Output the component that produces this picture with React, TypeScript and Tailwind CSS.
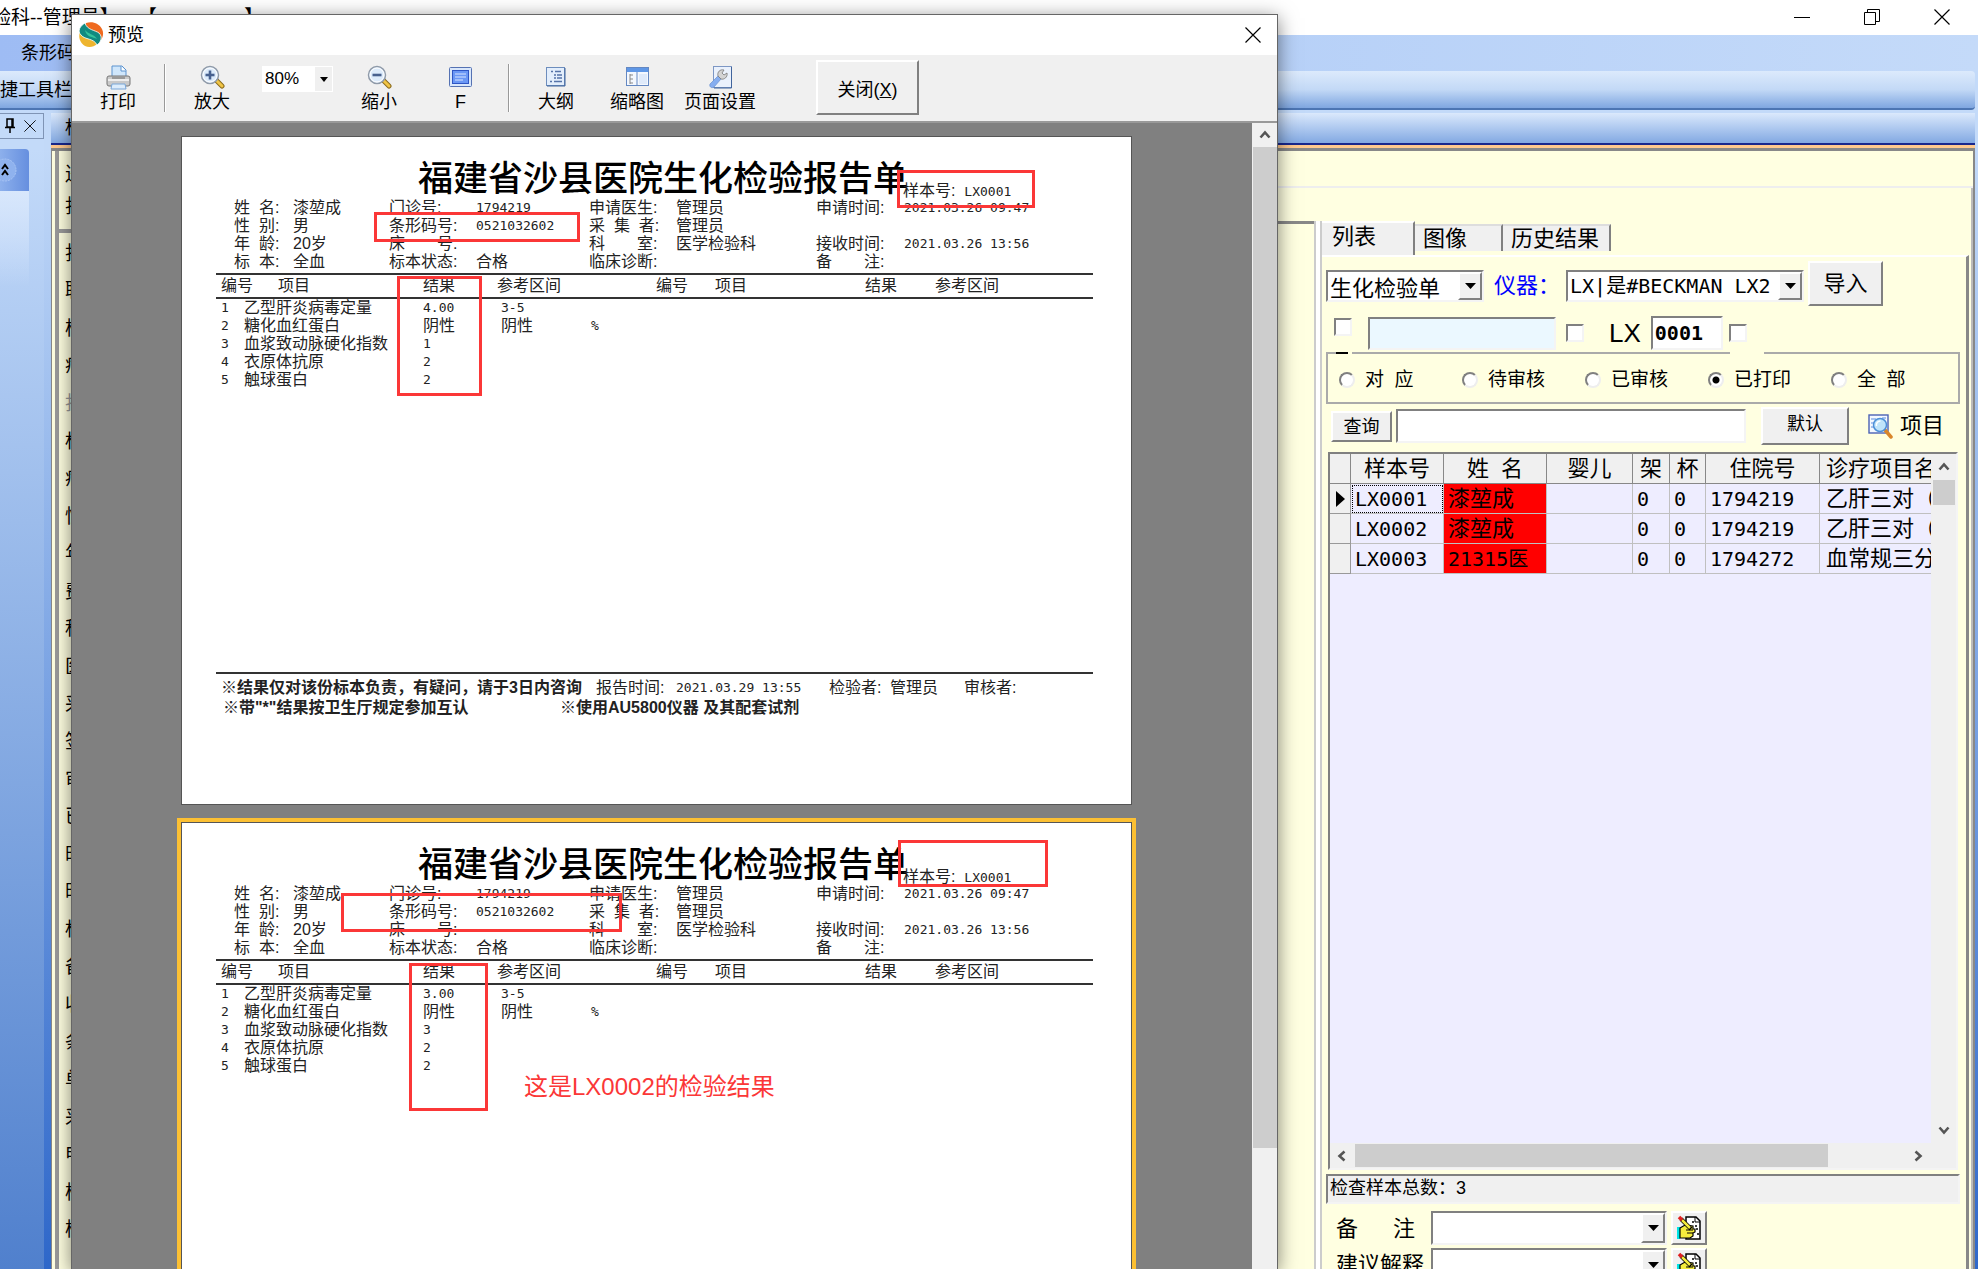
import type { ReactNode } from 'react';
import clsx from 'clsx';

const CJK = "font-['Liberation_Sans','Noto_Sans_CJK_SC',sans-serif]";
const MONO = "font-['DejaVu_Sans_Mono','Noto_Sans_CJK_SC',monospace]";

const SUNKEN = 'border-2 border-t-[#808080] border-l-[#808080] border-b-[#f4f4f4] border-r-[#f4f4f4]';
const RAISED = 'border-2 border-t-white border-l-white border-b-[#808080] border-r-[#808080] bg-[#f0f0f0]';

const samples = [
  { id: 'LX0001', name: '漆堃成', rack: '0', cup: '0', inpatient: '1794219', item: '乙肝三对（' },
  { id: 'LX0002', name: '漆堃成', rack: '0', cup: '0', inpatient: '1794219', item: '乙肝三对（' },
  { id: 'LX0003', name: '21315医', rack: '0', cup: '0', inpatient: '1794272', item: '血常规三分' },
];

const statuses = ['对  应', '待审核', '已审核', '已打印', '全  部'];

const formLabels = [
  '打', '联', '样', '病', '打', '标', '病', '性', '年', '费', '科', '医', '采', '签',
  '审', '已', '时', '时', '标', '备', '收', '条', '单', '采', '申', '样', '样',
];

const patientRows = [
  ['姓  名:', '漆堃成', '门诊号:', '1794219', '申请医生:', '管理员', '申请时间:', '2021.03.26 09:47'],
  ['性  别:', '男', '条形码号:', '0521032602', '采  集  者:', '管理员', '', ''],
  ['年  龄:', '20岁', '床　　号:', '', '科　　室:', '医学检验科', '接收时间:', '2021.03.26 13:56'],
  ['标  本:', '全血', '标本状态:', '合格', '临床诊断:', '', '备　　注:', ''],
];

const reportItems = [
  { name: '乙型肝炎病毒定量', range: '3-5', unit: '' },
  { name: '糖化血红蛋白', range: '阴性', unit: '%' },
  { name: '血浆致动脉硬化指数', range: '', unit: '' },
  { name: '衣原体抗原', range: '', unit: '' },
  { name: '触球蛋白', range: '', unit: '' },
];

function Combo({ label, value, className }: { label: string; value: string; className?: string }) {
  return (
    <div className={clsx('relative flex bg-white', SUNKEN, className)}>
      <select aria-label={label} className="w-full appearance-none bg-transparent pr-6 pl-[2px] outline-none">
        <option>{value}</option>
      </select>
      <span className={clsx('pointer-events-none absolute inset-y-0 right-0 flex w-6 items-center justify-center', RAISED)}>
        <svg width="11" height="6" viewBox="0 0 11 6"><path d="M0 0h11L5.5 6z" fill="#000" /></svg>
      </span>
    </div>
  );
}

function Check({ label, className }: { label: string; className?: string }) {
  return (
    <input
      type="checkbox"
      aria-label={label}
      className={clsx('size-[18px] shrink-0 appearance-none bg-white', SUNKEN, className)}
    />
  );
}

function Chevron({ rotate }: { rotate: string }) {
  return (
    <svg className={rotate} width="12" height="12" viewBox="0 0 12 12">
      <path d="M1.5 8.5 6 3.5l4.5 5" fill="none" stroke="#555" strokeWidth="2.6" />
    </svg>
  );
}

function CloseIcon({ size }: { size: number }) {
  return (
    <svg width={size} height={size} viewBox="0 0 16 16">
      <path d="M.5.5l15 15M15.5.5l-15 15" stroke="#000" strokeWidth="1.2" />
    </svg>
  );
}

function LogoIcon() {
  return (
    <svg width="26" height="26" viewBox="0 0 26 26">
      <path d="M8 1c6-2 13 0 16 6 2 4 1 8-1 11-1-6-5-7-9-9-4-1-7-5-6-8z" fill="#ef6a1f" />
      <path d="M2 10c-2 5 0 11 5 14 4 2 9 1 12-2-1-3-4-4-8-5-5-1-8-3-9-7z" fill="#eeb52f" />
      <path d="M7 1C2 4-1 9 3 13c4 5 13 3 16 10 4-3 6-8 2-12-4-3-12-3-14-10z" fill="#118a80" stroke="#fff" strokeWidth=".8" />
      <path d="M7 8c3 4 9 4 12 9-4-2-11-2-12-9z" fill="#35c39b" />
    </svg>
  );
}

function PrinterIcon() {
  return (
    <svg width="25" height="25" viewBox="0 0 25 25">
      <path d="M6 1h10l4 4v8H6z" fill="#cfe6fb" stroke="#5c93cf" />
      <path d="M15 1v5h5" fill="#fff" stroke="#5c93cf" />
      <rect x="1" y="11" width="23" height="10" rx="2" fill="#c9c9c9" stroke="#777" />
      <path d="M2 15h21" stroke="#eee" strokeWidth="2" />
      <path d="M6 11h13v3H6z" fill="#999" />
      <path d="M6 19h13l1 5H5z" fill="#dcecfb" stroke="#7aa7d8" />
    </svg>
  );
}

function ZoomIcon({ plus }: { plus?: boolean }) {
  return (
    <svg width="25" height="25" viewBox="0 0 25 25">
      <path d="M16 15l6 6" stroke="#8a6a1c" strokeWidth="5" strokeLinecap="round" />
      <path d="M17 16l5 5" stroke="#f0c445" strokeWidth="3" strokeLinecap="round" />
      <circle cx="10" cy="10" r="8.5" fill="#dcebfb" stroke="#8f9aa8" strokeWidth="1.5" />
      <circle cx="10" cy="10" r="7" fill="none" stroke="#fff" />
      <path d="M5.5 10h9" stroke="#47618f" strokeWidth="2.6" />
      {plus && <path d="M10 5.5v9" stroke="#47618f" strokeWidth="2.6" />}
    </svg>
  );
}

function FullPageIcon() {
  return (
    <svg width="23" height="21" viewBox="0 0 23 21">
      <rect x=".5" y=".5" width="22" height="19" rx="1" fill="#d9e7fb" stroke="#5572b3" />
      <rect x="3.5" y="3.5" width="16" height="13" fill="#6a97f5" stroke="#2e55c4" />
      <path d="M6 7h11M6 10h11M6 13h8" stroke="#d7e5ff" />
    </svg>
  );
}

function OutlineIcon() {
  return (
    <svg width="20" height="20" viewBox="0 0 20 20">
      <rect x=".5" y=".5" width="18" height="18" fill="#e3eefc" stroke="#6d8dbd" />
      <path d="M19 1v18H1" fill="none" stroke="#41649c" />
      <path d="M5 4.5h2M9 4.5h6M8 8h2M11 8h5M8 11h2M11 11h5M4 14.5h2M8 14.5h8" stroke="#5673a8" strokeWidth="1.4" />
    </svg>
  );
}

function ThumbsIcon() {
  return (
    <svg width="23" height="20" viewBox="0 0 23 20">
      <rect x=".5" y=".5" width="22" height="18" fill="#f4f8fe" stroke="#6488c2" />
      <path d="M1 1h21v4H1z" fill="#5f97e6" />
      <path d="M11 5v14" stroke="#6488c2" />
      <path d="M4 7v10M4 8h3M4 12h3M4 16h3" stroke="#888" fill="none" />
      <path d="M13 7h8v10h-8z" fill="#dfeafa" />
    </svg>
  );
}

function PageSetupIcon() {
  return (
    <svg width="23" height="23" viewBox="0 0 23 23">
      <rect x="4.5" y=".5" width="18" height="21" fill="#eaf1fc" stroke="#7d97c4" />
      <path d="M22.5 1v21H5" fill="none" stroke="#41649c" />
      <path d="M9 10l3 3-7 8c-3 2-5-1-4-3z" fill="#86aef0" stroke="#6a90d0" strokeWidth=".7" />
      <path d="M9 10c-1-4 2-7 6-6l-2 3 2 2 3-2c1 4-3 7-6 6z" fill="#d4d4d4" stroke="#777" strokeWidth=".8" />
    </svg>
  );
}

function FindItemIcon() {
  return (
    <svg width="25" height="25" viewBox="0 0 25 25">
      <rect x="1" y="1" width="19" height="18" fill="#f3f8ff" stroke="#4b62b5" strokeWidth="1.4" />
      <path d="M3 5h5M3 9h3M3 13h4M14 4h4" stroke="#5b8be0" />
      <path d="M17 16l6 7" stroke="#d9862b" strokeWidth="3.5" strokeLinecap="round" />
      <circle cx="12" cy="11" r="6.5" fill="#bfe4fa" stroke="#4d8fd6" strokeWidth="1.5" />
      <path d="M8.5 12a4 4 0 014-5" fill="none" stroke="#fff" strokeWidth="1.5" />
    </svg>
  );
}

function NoteIcon() {
  return (
    <svg width="26" height="26" viewBox="0 0 26 26">
      <path d="M10 2h10l4 4v18H10z" fill="#fff" stroke="#000" strokeWidth="1.5" />
      <path d="M19 2v5h5" fill="none" stroke="#000" />
      <path d="M17 6v2M19 11h2M20 14h2M21 19h2" stroke="#000" strokeWidth="1.5" />
      <path d="M1 12h3v12H1z" fill="#00e5e5" />
      <path d="M4 13l5-3 8 1v3h2v3l-2 1v3l-3 2H4z" fill="#f5ec3d" stroke="#000" strokeWidth="1.2" />
      <path d="M10 15h7M11 18h6" stroke="#000" />
      <path d="M5 4l10 10" stroke="#000" strokeWidth="4" />
      <path d="M6 5l8 8" stroke="#f5ec3d" strokeWidth="2.5" />
      <path d="M3 2l3 3" stroke="#e02020" strokeWidth="3.5" />
    </svg>
  );
}

function ToolButton({ icon, text, className }: { icon: ReactNode; text: string; className?: string }) {
  return (
    <button className={clsx('flex shrink-0 flex-col items-center gap-[2px] whitespace-nowrap text-lg leading-5', className)}>
      <span className="flex h-[26px] items-center">{icon}</span>
      {text}
    </button>
  );
}

function Report({ results, active, children }: { results: string[]; active?: boolean; children: ReactNode }) {
  return (
    <article
      className={clsx(
        'relative h-[669px] shrink-0 border border-[#555] bg-white pt-[22px] pr-[38px] pl-[34px] text-base leading-[18px] whitespace-pre text-[#222]',
        active && 'ring-4 ring-[#fcc033]',
      )}
    >
      <h2 className="pl-[202px] text-[35px] leading-10 font-medium text-black">福建省沙县医院生化检验报告单</h2>
      <p className="-mt-[17px] pl-[687px]">
        样本号:  <span className={clsx(MONO, 'text-[13px]')}>LX0001</span>
      </p>
      <div className="-mt-[2px] grid grid-cols-[59px_96px_87px_113px_87px_140px_88px_1fr] pl-[18px]">
        {patientRows.flat().map((cell, i) => (
          <span key={i} className={clsx('h-[18px]', /^\d[\d.: ]+$/.test(cell) && [MONO, 'text-[13px]'])}>
            {cell}
          </span>
        ))}
      </div>
      <table className="mt-[2px] w-full table-fixed text-left">
        <colgroup>
          <col className="w-[28px]" />
          <col className="w-[179px]" />
          <col className="w-[74px]" />
          <col className="w-[90px]" />
          <col className="w-[69px]" />
          <col className="w-[59px]" />
          <col className="w-[150px]" />
          <col className="w-[70px]" />
          <col />
        </colgroup>
        <thead>
          <tr className="h-[24px] border-y-2 border-[#333]">
            <th className="pl-[5px] font-normal">编号</th>
            <th className="pl-[34px] font-normal">项目</th>
            <th className="font-normal">结果</th>
            <th className="font-normal">参考区间</th>
            <th />
            <th className="font-normal">编号</th>
            <th className="font-normal">项目</th>
            <th className="font-normal">结果</th>
            <th className="font-normal">参考区间</th>
          </tr>
        </thead>
        <tbody>
          {reportItems.map((item, i) => (
            <tr key={item.name} className="h-[18px]">
              <td className={clsx(MONO, 'pl-[5px] text-[13px]')}>{i + 1}</td>
              <td>{item.name}</td>
              <td className={clsx(/\d/.test(results[i]) && [MONO, 'text-[13px]'])}>{results[i]}</td>
              <td className={clsx('pl-[4px]', /\d/.test(item.range) && [MONO, 'text-[13px]'])}>{item.range}</td>
              <td className={clsx(MONO, 'pl-[4px] text-[13px]')}>{item.unit}</td>
            </tr>
          ))}
        </tbody>
      </table>
      <footer className="mt-[283px] border-t-2 border-[#333] pt-[5px]">
        <div className="grid grid-cols-[375px_80px_153px_61px_74px_1fr] pl-[5px]">
          <b>※结果仅对该份标本负责，有疑问，请于3日内咨询</b>
          <span>报告时间:</span>
          <span className={clsx(MONO, 'text-[13px]')}>2021.03.29 13:55</span>
          <span>检验者:</span>
          <span>管理员</span>
          <span>审核者:</span>
        </div>
        <div className="mt-[2px] grid grid-cols-[337px_1fr] pl-[7px] font-bold">
          <span>※带"*"结果按卫生厅规定参加互认</span>
          <span>※使用AU5800仪器 及其配套试剂</span>
        </div>
      </footer>
      {children}
    </article>
  );
}

function Mark({ className }: { className: string }) {
  return <div className={clsx('absolute border-[3px] border-[#fb3737]', className)} />;
}

function PreviewDialog() {
  return (
    <section
      role="dialog"
      aria-label="预览"
      className="absolute top-[14px] right-[700px] bottom-0 left-[71px] flex flex-col overflow-hidden border border-b-0 border-[#666] bg-white shadow-[0_4px_18px_rgba(0,0,0,0.5)]"
    >
      <header className="flex h-10 shrink-0 items-center pr-4 pl-[6px]">
        <LogoIcon />
        <h1 className="ml-1 text-lg">预览</h1>
        <button aria-label="关闭预览" className="ml-auto"><CloseIcon size={16} /></button>
      </header>
      <div className="flex h-[66px] shrink-0 items-start bg-[#f0f0f0] pt-[9px] pl-7">
        <ToolButton icon={<PrinterIcon />} text="打印" />
        <div className="ml-7 h-12 w-[2px] shrink-0 border-l border-[#999] bg-white" />
        <ToolButton icon={<ZoomIcon plus />} text="放大" className="ml-7" />
        <div className="relative mt-[2px] ml-8 flex h-[26px] w-[71px] shrink-0 bg-white">
          <select aria-label="缩放比例" className="w-full appearance-none pl-[3px] text-[17px] outline-none">
            <option>80%</option>
          </select>
          <span className="pointer-events-none absolute inset-y-px right-px flex w-[17px] items-center justify-center bg-[#f0f0f0]">
            <svg width="8" height="5" viewBox="0 0 8 5"><path d="M0 0h8L4 5z" /></svg>
          </span>
        </div>
        <ToolButton icon={<ZoomIcon />} text="缩小" className="ml-7" />
        <ToolButton icon={<FullPageIcon />} text="F" className="ml-[52px]" />
        <div className="ml-9 h-12 w-[2px] shrink-0 border-l border-[#999] bg-white" />
        <ToolButton icon={<OutlineIcon />} text="大纲" className="ml-7" />
        <ToolButton icon={<ThumbsIcon />} text="缩略图" className="ml-9" />
        <ToolButton icon={<PageSetupIcon />} text="页面设置" className="ml-5" />
        <button className={clsx('-mt-1 ml-[60px] h-[55px] w-[103px] shrink-0 pt-1 text-lg', RAISED)}>
          关闭(<u>X</u>)
        </button>
      </div>
      <div className="flex min-h-0 flex-1 border-t-2 border-[#999]">
        <div className="flex flex-1 flex-col gap-[17px] overflow-hidden bg-[#808080] pt-[13px] pr-[120px] pl-[109px]">
          <Report results={['4.00', '阴性', '1', '2', '2']}>
            <Mark className="top-[33px] left-[715px] h-[38px] w-[138px]" />
            <Mark className="top-[75px] left-[192px] h-[30px] w-[206px]" />
            <Mark className="top-[139px] left-[215px] h-[120px] w-[85px]" />
          </Report>
          <Report active results={['3.00', '阴性', '3', '2', '2']}>
            <Mark className="top-[17px] left-[716px] h-[47px] w-[150px]" />
            <Mark className="top-[70px] left-[159px] h-[39px] w-[281px]" />
            <Mark className="top-[140px] left-[227px] h-[148px] w-[79px]" />
            <p className="absolute top-[248px] left-[342px] text-2xl leading-8 text-[#fb3737]">这是LX0002的检验结果</p>
          </Report>
        </div>
        <div className="flex w-[25px] shrink-0 flex-col items-center bg-[#f0f0f0]">
          <span className="flex h-6 items-center"><Chevron rotate="rotate-0" /></span>
          <div className="mb-[121px] w-6 flex-1 bg-[#cdcdcd]" />
        </div>
      </div>
    </section>
  );
}

function SampleGrid() {
  const cell = 'border-r border-b border-[#c0c0c0] px-1';
  return (
    <div className={clsx('mx-[2px] mt-[7px] flex min-h-0 flex-1 flex-col bg-[#f0f0f0]', SUNKEN)}>
      <div className="flex min-h-0 flex-1">
        <div className="flex-1 overflow-hidden bg-[#eeedff]">
          <table className="w-[640px] table-fixed border-separate border-spacing-0 text-left text-[22px] leading-7 whitespace-pre">
            <colgroup>
              <col className="w-[21px]" />
              <col className="w-[93px]" />
              <col className="w-[103px]" />
              <col className="w-[86px]" />
              <col className="w-[37px]" />
              <col className="w-[36px]" />
              <col className="w-[114px]" />
              <col />
            </colgroup>
            <thead>
              <tr className="h-[30px] bg-[#f0f0f0]">
                {['', '样本号', '姓  名', '婴儿', '架', '杯', '住院号', '诊疗项目名'].map((h, i) => (
                  <th
                    key={i}
                    className={clsx('border-r border-b border-[#888] px-1 font-normal', i < 7 ? 'text-center' : 'pl-[6px]')}
                  >
                    {h}
                  </th>
                ))}
              </tr>
            </thead>
            <tbody>
              {samples.map((s, i) => (
                <tr key={s.id} className="h-[30px]">
                  <td className="border-r border-b border-[#999] bg-[#f0f0f0] pl-[6px]">
                    {i === 0 && <svg width="9" height="16" viewBox="0 0 9 16"><path d="M0 0l9 8-9 8z" /></svg>}
                  </td>
                  <td className={clsx(cell, MONO, 'text-xl', i === 0 && 'outline-1 -outline-offset-2 outline-dotted')}>{s.id}</td>
                  <td className={clsx(cell, 'bg-[#ff0000]', i === 2 && [MONO, 'text-xl'])}>{s.name}</td>
                  <td className={cell} />
                  <td className={clsx(cell, MONO, 'text-xl')}>{s.rack}</td>
                  <td className={clsx(cell, MONO, 'text-xl')}>{s.cup}</td>
                  <td className={clsx(cell, MONO, 'text-xl')}>{s.inpatient}</td>
                  <td className={clsx(cell, 'pl-[6px]')}>{s.item}</td>
                </tr>
              ))}
            </tbody>
          </table>
        </div>
        <div className="flex w-[25px] flex-col items-center justify-between">
          <div className="flex flex-col items-center">
            <span className="flex h-[26px] items-center"><Chevron rotate="rotate-0" /></span>
            <div className="h-[25px] w-[22px] bg-[#cdcdcd]" />
          </div>
          <span className="flex h-[26px] items-center"><Chevron rotate="rotate-180" /></span>
        </div>
      </div>
      <div className="flex h-[25px] shrink-0 items-center pr-8 pl-[6px]">
        <Chevron rotate="-rotate-90" />
        <div className="ml-[7px] h-[23px] w-[473px] bg-[#cdcdcd]" />
        <span className="ml-auto"><Chevron rotate="rotate-90" /></span>
      </div>
    </div>
  );
}

function SamplePanel() {
  return (
    <section className="mr-[2px] flex w-[647px] shrink-0 flex-col pt-[34px]">
      <nav className="flex h-[33px] shrink-0 items-end text-[22px] leading-7">
        <button className="h-[34px] w-[93px] border-t-2 border-r-2 border-t-white border-r-[#808080] bg-[#f0f0f0] pb-2 pl-[10px] text-left">列表</button>
        <button className="mb-1 h-[27px] w-[88px] border-t-2 border-r-2 border-t-[#ddd] border-r-[#808080] bg-[#f0f0f0] pl-2 text-left leading-6">图像</button>
        <button className="mb-1 h-[27px] w-[108px] border-t-2 border-r-2 border-t-[#ddd] border-r-[#808080] bg-[#f0f0f0] pl-2 text-left leading-6">历史结果</button>
      </nav>
      <div className="flex min-h-0 flex-1 flex-col border-t-2 border-r-[3px] border-t-white border-r-[#888] pt-1 pr-[6px] pl-[4px]">
        <div className="flex h-[45px] shrink-0 items-center text-[22px]">
          <Combo label="检验单类型" value="生化检验单" className="mt-1 h-8 w-[158px]" />
          <span className="mt-1 ml-[10px] text-[#0000ff]">仪器：</span>
          <Combo label="仪器" value="LX|是#BECKMAN LX2" className={clsx(MONO, 'mt-1 ml-[6px] h-8 w-[238px] text-xl')} />
          <button className={clsx('ml-1 h-[45px] w-[75px]', RAISED)}>导入</button>
        </div>
        <div className="mt-2 flex h-[38px] shrink-0 items-center">
          <Check label="启用条件" className="mb-3 ml-2" />
          <input aria-label="条件" className={clsx('ml-4 h-[33px] w-[188px] bg-[#ebf8ff]', SUNKEN)} />
          <Check label="启用样本号" className="ml-[10px]" />
          <label htmlFor="sample-no" className="ml-[25px] text-[26px]">LX</label>
          <input
            id="sample-no"
            defaultValue="0001"
            className={clsx('ml-[10px] h-[34px] w-[72px] bg-white pl-[2px] text-xl font-bold outline-none', MONO, SUNKEN)}
          />
          <Check label="锁定样本号" className="ml-[6px]" />
        </div>
        <fieldset className="relative h-[52px] shrink-0 border-2 border-[#aaa] text-[19px]">
          <span className="absolute -top-[2px] left-2 h-[2px] w-4 border-r-4 border-[#ffffe1] bg-black" />
          <span className="absolute -top-[2px] left-[402px] h-[2px] w-[34px] bg-[#ffffe1]" />
          <div className="flex items-center pt-[14px] pl-[11px] leading-6">
            {statuses.map((s) => (
              <label key={s} className="flex w-[123px] shrink-0 items-center gap-[10px] whitespace-pre">
                <input
                  type="radio"
                  name="status"
                  defaultChecked={s === '已打印'}
                  className="size-4 appearance-none rounded-full border-2 border-t-[#808080] border-r-[#eee] border-b-[#eee] border-l-[#808080] bg-white checked:bg-[radial-gradient(#000_3px,#fff_4px)]"
                />
                {s}
              </label>
            ))}
          </div>
        </fieldset>
        <div className="mt-[3px] flex h-[38px] shrink-0 items-center">
          <button className={clsx('ml-[5px] h-[31px] w-[61px] text-lg', RAISED)}>查询</button>
          <input aria-label="查询内容" className={clsx('ml-1 h-[34px] w-[350px] bg-white', SUNKEN)} />
          <button className={clsx('ml-[15px] h-[38px] w-[88px] pb-1 text-lg', RAISED)}>默认</button>
          <button className="ml-[19px] flex items-center gap-[7px] text-[22px] leading-7"><FindItemIcon />项目</button>
        </div>
        <SampleGrid />
        <div className={clsx('mt-1 h-[30px] shrink-0 bg-[#f0f0f0] pl-[2px] text-lg leading-6', SUNKEN)}>检查样本总数：3</div>
        <div className="mt-[7px] flex h-[34px] shrink-0 items-center text-[22px]">
          <span className="flex w-[105px] justify-between pr-4 pl-[10px]"><span>备</span><span>注</span></span>
          <Combo label="备注" value="" className="h-[34px] w-[236px]" />
          <button aria-label="编辑备注" className={clsx('ml-1 flex h-[34px] w-9 items-center justify-center', RAISED)}><NoteIcon /></button>
        </div>
        <div className="mt-[3px] flex h-[21px] shrink-0 items-start overflow-hidden text-[22px]">
          <span className="w-[105px] pl-[10px] leading-[34px]">建议解释</span>
          <Combo label="建议解释" value="" className="h-[34px] w-[236px]" />
          <button aria-label="编辑建议解释" className={clsx('ml-1 flex h-[34px] w-9 items-center justify-center', RAISED)}><NoteIcon /></button>
        </div>
      </div>
    </section>
  );
}

export default function App() {
  return (
    <div className={clsx('relative flex h-screen flex-col overflow-hidden bg-[#c3daf9] text-black', CJK)}>
      <header className="flex h-[35px] shrink-0 items-center bg-white">
        <span className="-ml-2 text-[19px] leading-6 whitespace-pre">验科--管理员】　　【powermax】</span>
        <div className="mr-7 mb-[2px] ml-auto flex items-center gap-[54px]">
          <button aria-label="最小化" className="w-4"><svg width="16" height="16"><path d="M0 8.5h16" stroke="#000" /></svg></button>
          <button aria-label="还原" className="w-4">
            <svg width="16" height="16" fill="none" stroke="#000"><path d="M.5 3.5h11v12h-11zM3.5 3.5v-3h12v12h-4" /></svg>
          </button>
          <button aria-label="关闭"><CloseIcon size={16} /></button>
        </div>
      </header>
      <nav className="flex h-9 shrink-0 items-center bg-linear-to-r from-[#9ebcf4] via-[#b2cdf7] to-[#c4daf9] pl-[21px]">
        <button className="text-lg leading-5">条形码</button>
      </nav>
      <div className="mr-[3px] flex h-[39px] shrink-0 items-center rounded-r border-b-2 border-[#4c75b3] bg-linear-to-b from-[#dceafc] via-[#c3d9f6] to-[#7fa6e0] text-lg leading-5">捷工具栏</div>
      <div className="flex min-h-0 flex-1 pt-[3px]">
        <aside className="flex w-[51px] shrink-0 flex-col">
          <div className="mr-[7px] flex h-[26px] shrink-0 items-center gap-2 border border-l-0 border-[#7f94b5] bg-[#c3daf9] pl-1">
            <svg width="12" height="16" viewBox="0 0 12 16" fill="none" stroke="#000" strokeWidth="1.5">
              <path d="M3 1h6v8H3zM1 9.5h10M6 10v5M8 1v8" />
            </svg>
            <CloseIcon size={12} />
          </div>
          <div className="mt-[10px] flex min-h-0 flex-1 bg-linear-to-b from-[#c3daf9] to-[#2f68ca]">
            <div className="flex w-11 flex-col bg-linear-to-b from-[#c3daf9] to-[#5080cd]">
              <div className="flex h-[42px] w-[29px] items-center rounded-tr bg-linear-to-r from-[#8db0ec] to-[#668fdf]">
                <svg width="20" height="26" viewBox="0 0 20 26" fill="none">
                  <circle cx="5" cy="13" r="11" fill="#8fb2ee" stroke="#a9c5f5" strokeDasharray="2 1" />
                  <path d="M2 12l3-4 3 4M2 18l3-4 3 4" stroke="#000" strokeWidth="2" />
                </svg>
              </div>
              <div className="h-24 w-[29px] bg-linear-to-b from-[#d8e7fc] to-transparent" />
            </div>
          </div>
        </aside>
        <main className="mr-[3px] flex flex-1 flex-col">
          <div className="flex h-[30px] shrink-0 items-center bg-linear-to-b from-[#dbe9fc] to-[#83a9e2] pl-[14px] text-lg">标</div>
          <div className="h-[2px] shrink-0 bg-[#19278d]" />
          <div className="h-[3px] shrink-0 bg-[#ffc98e]" />
          <div className="flex min-h-0 flex-1 border-t-[3px] border-r-2 border-[#888] bg-[#ffffe1]">
            <aside className="flex w-48 shrink-0 flex-col border-l border-[#888]">
              <div className="ml-[3px] h-20 border-b-2 border-l-4 border-[#999] pt-2 pl-[6px] text-[19px] leading-8">
                <p>送</p>
                <p>打</p>
              </div>
              <div className="ml-[3px] flex min-h-0 flex-1 flex-col border-t-2 border-l-4 border-[#999] pt-[2px] pb-5 pl-[6px] text-[19px] leading-6">
                {formLabels.map((label, i) => (
                  <span key={i} className={clsx('flex flex-1 items-center', i === 4 && 'text-[#999]')}>{label}</span>
                ))}
              </div>
            </aside>
            <div className="flex min-w-0 flex-1 flex-col">
              <div className="h-[37px] shrink-0 border-b-2 border-[#eee]" />
              <div className="flex min-h-0 flex-1 border-r-2 border-[#bbb]">
                <div className="mt-[33px] flex-1 border-t-[3px] border-[#888]" />
                <div className="mt-[33px] w-2 shrink-0 border-x-2 border-x-[#ccc] bg-white" />
                <SamplePanel />
              </div>
            </div>
          </div>
        </main>
        <div className="absolute right-0 bottom-0 h-[1120px] w-[3px] bg-linear-to-b from-[#c3daf9] to-[#2f68ca]" />
      </div>
      <PreviewDialog />
    </div>
  );
}
